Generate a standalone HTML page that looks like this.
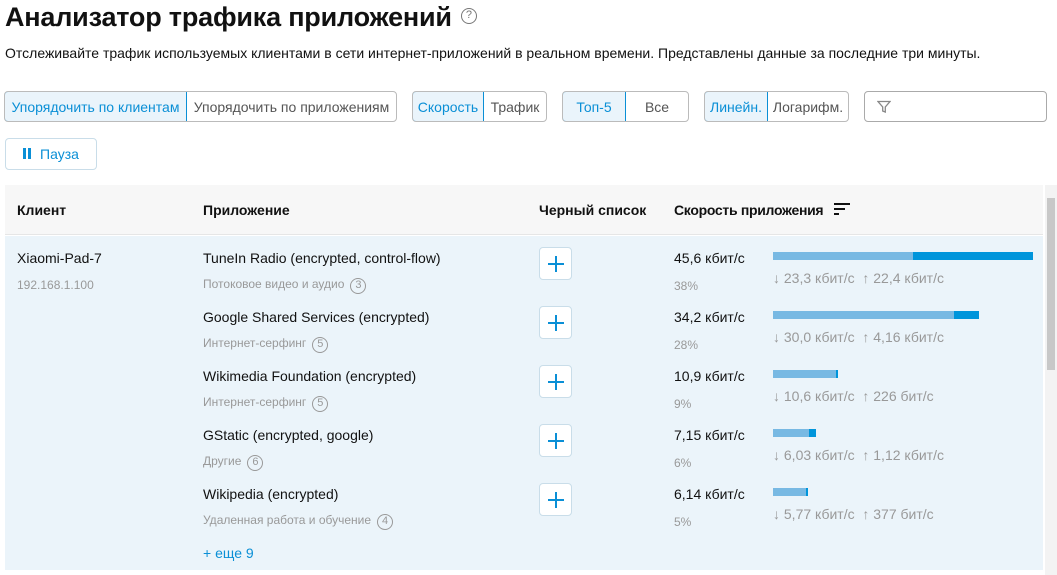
<!DOCTYPE html><html><head><meta charset="utf-8"><style>
*{box-sizing:border-box;margin:0;padding:0}
body{width:1057px;height:575px;overflow:hidden;background:#fff;font-family:"Liberation Sans",sans-serif;color:#111;position:relative}
.a{position:absolute;white-space:nowrap}
h1{position:absolute;left:5px;top:2px;font-size:27px;font-weight:bold;letter-spacing:-0.2px}
.q{display:inline-block;width:16px;height:16px;border:1.5px solid #777;border-radius:50%;font-size:11px;color:#777;text-align:center;line-height:13px;vertical-align:middle;font-weight:normal;margin-left:9px;position:relative;top:-3px}
.grp{position:absolute;top:91px;height:31px;display:flex;border:1px solid #bbb;border-radius:4px;overflow:hidden;font-size:14px;color:#555}
.grp div{display:flex;align-items:center;justify-content:center;height:100%}
.grp .on{background:#eaf4fb;color:#0a8fd6;border:1px solid #0a8fd6;border-radius:4px 0 0 4px;margin:-1px 0 -1px -1px;height:31px}
.hd{font-size:14px;font-weight:bold}
.nm{font-size:14px}
.sub{font-size:12px;color:#999}
.st{font-size:14px;color:#999}
.c{display:inline-block;width:16px;height:16px;border:1.5px solid #999;border-radius:50%;font-size:11px;text-align:center;line-height:13px;margin-left:6px;color:#999}
.pb{position:absolute;left:539px;width:33px;height:33px;border:1px solid #c9dde9;border-radius:4px;background:#fff}
.pb:after{content:"";position:absolute;left:8px;top:15px;width:16px;height:1.5px;background:#0a8fd6}
.pb:before{content:"";position:absolute;left:15.3px;top:8px;width:1.5px;height:16px;background:#0a8fd6}
.bar{position:absolute;left:773px;height:8px;display:flex}
.l{background:#78b9e3;height:8px}.d{background:#0095db;height:8px}
.sp{font-size:14px}
</style></head><body>
<h1>Анализатор трафика приложений<span class="q">?</span></h1>
<div class="a" style="left:5px;top:45px;font-size:14px">Отслеживайте трафик используемых клиентами в сети интернет-приложений в реальном времени. Представлены данные за последние три минуты.</div>
<div class="grp" style="left:4px;width:393px"><div class="on" style="width:183px">Упорядочить по клиентам</div><div style="flex:1">Упорядочить по приложениям</div></div>
<div class="grp" style="left:412px;width:135px"><div class="on" style="width:72px">Скорость</div><div style="flex:1">Трафик</div></div>
<div class="grp" style="left:562px;width:127px"><div class="on" style="width:64px">Топ-5</div><div style="flex:1">Все</div></div>
<div class="grp" style="left:704px;width:145px"><div class="on" style="width:64px">Линейн.</div><div style="flex:1">Логарифм.</div></div>
<div class="a" style="left:864px;top:91px;width:183px;height:31px;border:1px solid #aaa;border-radius:4px"><svg style="position:absolute;left:12px;top:8px" width="14" height="14" viewBox="0 0 14 14"><path d="M1 1.5h12L8.3 7v5L5.7 11V7z" fill="none" stroke="#888" stroke-width="1.3"/></svg></div>
<div class="a" style="left:5px;top:138px;width:92px;height:32px;border:1px solid #c9dde9;border-radius:4px;color:#0a8fd6;font-size:14px;line-height:30px;padding-left:17px"><span style="display:inline-block;width:3px;height:11px;background:#0a8fd6;margin-right:2px"></span><span style="display:inline-block;width:3px;height:11px;background:#0a8fd6;margin-right:9px"></span>Пауза</div>
<div class="a" style="left:5px;top:185px;width:1038px;height:50px;background:#f7f7f7;border-bottom:1px solid #e6e6e6"></div>
<div class="a" style="left:5px;top:236px;width:1038px;height:334px;background:#ebf4fa"></div>
<div class="a" style="left:1045px;top:185px;width:12px;height:390px;background:#f3f3f3"></div>
<div class="a" style="left:1047px;top:198px;width:8px;height:172px;background:#c8c8c8"></div>
<div class="a hd" style="left:17px;top:202px">Клиент</div>
<div class="a hd" style="left:203px;top:202px">Приложение</div>
<div class="a hd" style="left:539px;top:202px">Черный список</div>
<div class="a hd" style="left:674px;top:202px;letter-spacing:-0.3px">Скорость приложения</div>
<svg class="a" style="left:834px;top:203px" width="16" height="12"><rect x="0" y="0" width="16" height="2" fill="#111"/><rect x="0" y="5" width="11" height="2" fill="#111"/><rect x="0" y="10" width="5" height="2" fill="#111"/></svg>
<div class="a nm" style="left:17px;top:250px">Xiaomi-Pad-7</div>
<div class="a sub" style="left:17px;top:278px">192.168.1.100</div>

<div class="a nm" style="left:203px;top:250px">TuneIn Radio (encrypted, control-flow)</div>
<div class="a sub" style="left:203px;top:277px">Потоковое видео и аудио<span class="c">3</span></div>
<div class="pb" style="top:247px"></div>
<div class="a sp" style="left:674px;top:250px">45,6 кбит/с</div><div class="a sub" style="left:674px;top:279px">38%</div>
<div class="bar" style="top:252px"><div class="l" style="width:140px"></div><div class="d" style="width:120px"></div></div>
<div class="a st" style="left:773px;top:270px">↓ 23,3 кбит/с&nbsp; ↑ 22,4 кбит/с</div>

<div class="a nm" style="left:203px;top:309px">Google Shared Services (encrypted)</div>
<div class="a sub" style="left:203px;top:336px">Интернет-серфинг<span class="c">5</span></div>
<div class="pb" style="top:306px"></div>
<div class="a sp" style="left:674px;top:309px">34,2 кбит/с</div><div class="a sub" style="left:674px;top:338px">28%</div>
<div class="bar" style="top:311px"><div class="l" style="width:181px"></div><div class="d" style="width:25px"></div></div>
<div class="a st" style="left:773px;top:329px">↓ 30,0 кбит/с&nbsp; ↑ 4,16 кбит/с</div>

<div class="a nm" style="left:203px;top:368px">Wikimedia Foundation (encrypted)</div>
<div class="a sub" style="left:203px;top:395px">Интернет-серфинг<span class="c">5</span></div>
<div class="pb" style="top:365px"></div>
<div class="a sp" style="left:674px;top:368px">10,9 кбит/с</div><div class="a sub" style="left:674px;top:397px">9%</div>
<div class="bar" style="top:370px"><div class="l" style="width:63px"></div><div class="d" style="width:2px"></div></div>
<div class="a st" style="left:773px;top:388px">↓ 10,6 кбит/с&nbsp; ↑ 226 бит/с</div>

<div class="a nm" style="left:203px;top:427px">GStatic (encrypted, google)</div>
<div class="a sub" style="left:203px;top:454px">Другие<span class="c">6</span></div>
<div class="pb" style="top:424px"></div>
<div class="a sp" style="left:674px;top:427px">7,15 кбит/с</div><div class="a sub" style="left:674px;top:456px">6%</div>
<div class="bar" style="top:429px"><div class="l" style="width:36px"></div><div class="d" style="width:7px"></div></div>
<div class="a st" style="left:773px;top:447px">↓ 6,03 кбит/с&nbsp; ↑ 1,12 кбит/с</div>

<div class="a nm" style="left:203px;top:486px">Wikipedia (encrypted)</div>
<div class="a sub" style="left:203px;top:513px">Удаленная работа и обучение<span class="c">4</span></div>
<div class="pb" style="top:483px"></div>
<div class="a sp" style="left:674px;top:486px">6,14 кбит/с</div><div class="a sub" style="left:674px;top:515px">5%</div>
<div class="bar" style="top:488px"><div class="l" style="width:33px"></div><div class="d" style="width:2px"></div></div>
<div class="a st" style="left:773px;top:506px">↓ 5,77 кбит/с&nbsp; ↑ 377 бит/с</div>

<div class="a" style="left:203px;top:545px;font-size:14px;color:#0a8fd6">+ еще 9</div>
</body></html>
